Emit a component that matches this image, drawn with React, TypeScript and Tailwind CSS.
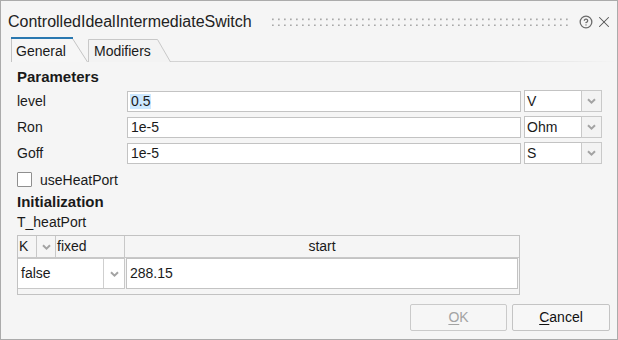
import { CircleHelp, X } from 'lucide-react'

const params = [
  { label: 'level', value: '0.5', unit: 'V', selected: true },
  { label: 'Ron', value: '1e-5', unit: 'Ohm', selected: false },
  { label: 'Goff', value: '1e-5', unit: 'S', selected: false },
]

function Chevron({ className = '' }: { className?: string }) {
  return (
    <svg width="9" height="6" viewBox="0 0 9 6" className={className}>
      <path d="M1 1.2 L4.5 4.6 L8 1.2" fill="none" stroke="#a3a3a3" strokeWidth="2" />
    </svg>
  )
}

function Grip() {
  return (
    <svg className="h-[8px] flex-1 mt-[5px]" preserveAspectRatio="none">
      <defs>
        <pattern id="grip" width="6" height="6" patternUnits="userSpaceOnUse">
          <rect x="1" y="0.5" width="1.7" height="1.7" fill="#a9a9a9" />
        </pattern>
      </defs>
      <rect width="100%" height="8" fill="url(#grip)" />
    </svg>
  )
}

function UnitCombo({ unit }: { unit: string }) {
  return (
    <div className="flex h-[22px] w-[78px] -mt-px">
      <div className="w-[58px] border border-[#c3c3c3] bg-white pl-[2px] flex items-center">{unit}</div>
      <div className="w-[21px] -ml-px border border-[#c9c9c9] bg-[#f3f3f3] flex items-center justify-center">
        <Chevron />
      </div>
    </div>
  )
}

export default function App() {
  return (
    <div
      className="w-[618px] h-[340px] border border-[#ababab] bg-[#f5f5f5] flex flex-col text-[14px] text-[#1a1a1a] overflow-hidden"
      style={{ fontFamily: '"Liberation Sans", Arial, sans-serif' }}
    >
      {/* title bar */}
      <div className="h-[36px] flex items-start pt-[12px] pl-[7px] pr-[12px]">
        <span className="text-[16px] leading-[18px] text-[#222] shrink-0">ControlledIdealIntermediateSwitch</span>
        <div className="flex-1 flex ml-[19px] mr-[8px]">
          <Grip />
        </div>
        <CircleHelp size={14} strokeWidth={2.2} className="shrink-0 text-[#6b6b6b] mt-[2px]" />
        <X size={18} strokeWidth={1.4} className="shrink-0 text-[#555] ml-[2px]" />
      </div>

      {/* tabs */}
      <div className="h-[25px] flex pl-[10px]">
        <div className="relative w-[77px] h-[25px]">
          <svg className="absolute inset-0" width="77" height="25">
            <path d="M0.5 25 V1.5 H61.5 L76.5 25" fill="#f6f6f6" stroke="#c4c4c4" />
            <line x1="0" y1="1" x2="62" y2="1" stroke="#2a78b0" strokeWidth="2" />
          </svg>
          <span className="relative block pl-[5px] pt-[6px] leading-[16px]">General</span>
        </div>
        <div className="flex-1 flex bg-[linear-gradient(to_right,#d2d2d2,#d8d8d8_75%,transparent)] bg-no-repeat bg-bottom bg-[length:100%_1px]">
          <div className="relative w-[83px] h-[25px]">
            <svg className="absolute inset-0" width="83" height="25">
              <path d="M0.5 25 V2.5 H69.5 L82.5 25" fill="#f3f3f3" stroke="#c8c8c8" />
            </svg>
            <span className="relative block pl-[6px] pt-[6px] leading-[16px]">Modifiers</span>
          </div>
        </div>
      </div>

      {/* content */}
      <div className="flex flex-col pl-[16px] pt-[6px]">
        <div className="text-[15px] font-bold leading-[18px]">Parameters</div>

        <div className="mt-[5px] flex flex-col gap-[5px]">
          {params.map((p) => (
            <div key={p.label} className="flex h-[21px] items-start">
              <div className="w-[110px] h-[21px] flex items-center">{p.label}</div>
              <div className="w-[394px] h-[21px] border border-[#c3c3c3] bg-white pl-[2px] flex items-center">
                {p.selected ? <span className="bg-[#cce8ff] leading-[15px] px-px">{p.value}</span> : <span className="pl-px">{p.value}</span>}
              </div>
              <div className="ml-[3px]">
                <UnitCombo unit={p.unit} />
              </div>
            </div>
          ))}
        </div>

        <label className="mt-[8px] flex items-center h-[15px] gap-[8px]">
          <span className="w-[15px] h-[15px] border border-[#8f8f8f] bg-white rounded-[1px]" />
          <span className="leading-[16px]">useHeatPort</span>
        </label>

        <div className="mt-[6px] text-[15px] font-bold leading-[18px]">Initialization</div>
        <div className="mt-[2px] leading-[18px]">T_heatPort</div>

        {/* table */}
        <div className="mt-[4px] w-[503px] h-[60px] border border-[#c2c2c2] flex flex-col">
          <div className="h-[22px] flex border-b border-[#c8c8c8]">
            <div className="w-[19px] border-r border-[#c8c8c8] pl-px flex items-center">K</div>
            <div className="w-[19px] border-r border-[#c8c8c8] flex items-center justify-center">
              <Chevron />
            </div>
            <div className="w-[69px] border-r border-[#c8c8c8] pl-[1px] flex items-center">fixed</div>
            <div className="flex-1 flex items-center justify-center">start</div>
          </div>
          <div className="h-[31px] flex">
            <div className="w-[107px] border border-l-0 border-[#c8c8c8] bg-white flex">
              <div className="w-[86px] border-r border-[#cfcfcf] pl-[3px] flex items-center">false</div>
              <div className="flex-1 flex items-center justify-center">
                <Chevron />
              </div>
            </div>
            <div className="flex-1 ml-px mr-px border border-[#c3c3c3] bg-white pl-[3px] flex items-center">288.15</div>
          </div>
        </div>
      </div>

      {/* buttons */}
      <div className="mt-[9px] flex justify-end gap-[5px] pr-[7px]">
        <button className="w-[97px] h-[27px] border border-[#cacaca] bg-[#f6f6f6] text-[#a3a3a3] rounded-[2px]">
          <span className="underline underline-offset-2">O</span>K
        </button>
        <button className="w-[98px] h-[27px] border border-[#c4c4c4] bg-[#f7f7f7] text-[#111] rounded-[2px]">
          <span className="underline underline-offset-2">C</span>ancel
        </button>
      </div>
    </div>
  )
}
